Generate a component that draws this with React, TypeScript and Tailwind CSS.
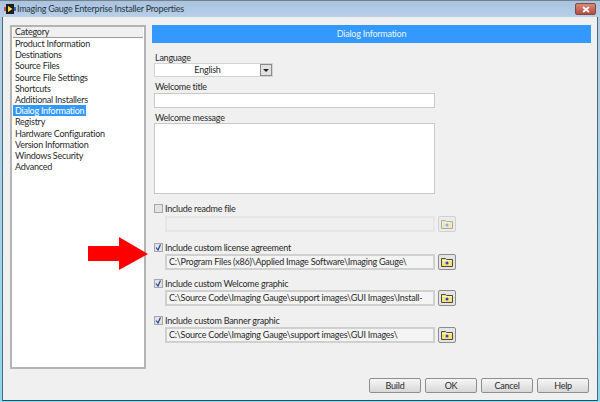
const categories = [
  'Product Information',
  'Destinations',
  'Source Files',
  'Source File Settings',
  'Shortcuts',
  'Additional Installers',
  'Dialog Information',
  'Registry',
  'Hardware Configuration',
  'Version Information',
  'Windows Security',
  'Advanced',
];

function FolderIcon({ faded }: { faded?: boolean }) {
  return (
    <svg width="12" height="10" viewBox="0 0 12 10" className={faded ? 'opacity-40' : ''} aria-hidden="true">
      <path d="M0.5 9.5V1.5H4.5L5.5 2.5H11.5V9.5Z" fill="#f5e27a" stroke="#4a4a38" strokeWidth="1" />
      <rect x="1" y="3" width="10" height="1" fill="#fff6b8" />
      <circle cx="6" cy="6" r="1.5" fill="#3b3fd0" />
    </svg>
  );
}

function CheckBox({ checked }: { checked?: boolean }) {
  return (
    <div className="w-[9px] h-[9px] bg-[#dfe3ea] border border-[#a8a8a8] flex items-center justify-center shrink-0">
      {checked && (
        <svg width="7" height="7" viewBox="0 0 7 7" aria-hidden="true">
          <path d="M1 3.5L3 6L5.5 0.5" fill="none" stroke="#2a3f9a" strokeWidth="1.2" />
        </svg>
      )}
    </div>
  );
}

function PathRow({ label, path, checked, className, fieldClass }: { label: string; path?: string; checked?: boolean; className: string; fieldClass: string }) {
  return (
    <div className={className}>
      <div className="flex items-center gap-[2px] h-[11px]">
        <CheckBox checked={checked} />
        <span className="text-[#2a2a2a] leading-[11px]">{label}</span>
      </div>
      <div className={`flex items-center gap-[3px] ml-[11px] ${fieldClass}`}>
        <div
          className={`w-[270px] h-[16px] border-2 flex items-center pl-[2px] whitespace-nowrap overflow-hidden text-[#2a2a2a] ${
            checked ? 'border-[#d0d0d0] bg-[#f4f4f4]' : 'border-[#e6e6e6] bg-[#efefef]'
          }`}
        >
          {path}
        </div>
        <div
          className={`w-[18px] h-[16px] rounded-[2px] border flex items-center justify-center ${
            checked ? 'border-[#8c8c8c] bg-[#e4e4e4]' : 'border-[#d0d0d0] bg-[#ececec]'
          }`}
        >
          <FolderIcon faded={!checked} />
        </div>
      </div>
    </div>
  );
}

function DialogButton({ label }: { label: string }) {
  return (
    <div className="w-[52px] h-[15px] rounded-[2px] border border-[#8e8e8e] bg-gradient-to-b from-[#f6f6f6] to-[#d8d8d8] flex items-center justify-center text-[#2a2a2a]">
      {label}
    </div>
  );
}

export default function App() {
  return (
    <div className="relative w-[600px] h-[402px] overflow-hidden flex flex-col text-[9px] tracking-[-0.24px] font-['Lato','Noto_Sans',sans-serif] bg-gradient-to-b from-[#b5cbe2] to-[#8fd8ee]">
      <div className="h-[17px] shrink-0 flex items-center border-t border-[#77818c] bg-gradient-to-b from-[#aac3de] to-[#b7cfe8]">
        <svg width="12" height="12" viewBox="0 0 12 12" className="ml-[4px]" aria-hidden="true">
          <path d="M0 4H2V8H0Z" fill="#d04848" />
          <path d="M10 4H12V8H10Z" fill="#3c62c8" />
          <rect x="2" y="1" width="8" height="10" fill="#1c1c1c" />
          <path d="M4 3L8.5 6L4 9Z" fill="#f2e23c" />
        </svg>
        <span className="ml-[1px] text-[#2b3440]">Imaging Gauge Enterprise Installer Properties</span>
        <div className="ml-auto mr-[4px] w-[21px] h-[12px] rounded-[2px] border border-[#7c4a44] bg-gradient-to-b from-[#d98a78] to-[#b9483a] flex items-center justify-center">
          <svg width="8" height="7" viewBox="0 0 8 7" aria-hidden="true">
            <path d="M1 1L7 6M7 1L1 6" stroke="#ffffff" strokeWidth="1.8" />
          </svg>
        </div>
      </div>

      <div className="flex-1 mx-[2px] mb-[1px] bg-[#f0f0f0] flex flex-col pt-[8px] pl-[7px] pr-[6px] border-x border-b border-x-[#4a6a7c] border-b-[#0e5a68]">
        <div className="flex gap-[6px]">
          <div className="w-[136px] h-[344px] border-2 border-[#b4b4b4] bg-white">
            <div className="h-[11px] mx-[1px] bg-[#f0f0f0] border-b border-[#9a9a9a] pl-[2px] leading-[10px] text-[#2a2a2a]">Category</div>
            <div className="pl-[3px]">
              {categories.map((c) => (
                <div key={c} className="h-[11.2px] leading-[11.2px] text-[#2a2a2a] whitespace-nowrap">
                  {c === 'Dialog Information' ? (
                    <span className="inline-block -ml-[2px] px-[2px] bg-[#3399ff] text-white">{c}</span>
                  ) : (
                    c
                  )}
                </div>
              ))}
            </div>
          </div>

          <div className="w-[439px] flex flex-col">
            <div className="h-[18px] bg-[#3399ff] text-[#e8f3ff] text-center leading-[17px]">Dialog Information</div>

            <div className="pl-[2px] flex flex-col">
              <div className="mt-[9px] h-[11px] leading-[11px] text-[#2a2a2a] pl-[1px]">Language</div>
              <div className="w-[119px] h-[14px] border border-[#d4d4d4] bg-white flex items-center">
                <span className="flex-1 text-center text-[#2a2a2a]">English</span>
                <div className="w-[12px] h-[12px] border border-[#8a8a8a] bg-[#e2e2e2] flex items-center justify-center">
                  <div className="w-0 h-0 border-x-[3px] border-x-transparent border-t-[3px] border-t-[#222]" />
                </div>
              </div>
              <div className="mt-[4px] h-[12px] leading-[11px] text-[#2a2a2a] pl-[1px]">Welcome title</div>
              <div className="w-[281px] h-[15px] border border-[#c8c8c8] bg-white" />
              <div className="mt-[4px] h-[11px] leading-[11px] text-[#2a2a2a] pl-[1px]">Welcome message</div>
              <div className="w-[281px] h-[71px] border border-[#c8c8c8] bg-white" />

              <PathRow className="mt-[9px]" fieldClass="mt-[2px]" label="Include readme file" />
              <PathRow className="mt-[10px]" fieldClass="mt-[1px]" label="Include custom license agreement" checked path="C:\Program Files (x86)\Applied Image Software\Imaging Gauge\" />
              <PathRow className="mt-[8px]" fieldClass="mt-[1px]" label="Include custom Welcome graphic" checked path="C:\Source Code\Imaging Gauge\support images\GUI Images\Install-" />
              <PathRow className="mt-[9px]" fieldClass="mt-[1px]" label="Include custom Banner graphic" checked path="C:\Source Code\Imaging Gauge\support images\GUI Images\" />
            </div>
          </div>
        </div>

        <div className="mt-[9px] flex justify-end gap-[4px] pr-[2px]">
          <DialogButton label="Build" />
          <DialogButton label="OK" />
          <DialogButton label="Cancel" />
          <DialogButton label="Help" />
        </div>
      </div>

      <svg width="60" height="33" viewBox="0 0 60 33" className="absolute left-[88px] top-[237px]" aria-hidden="true">
        <path d="M0 9H31V0L60 17L31 33V24H0Z" fill="#ff0000" />
      </svg>
    </div>
  );
}
